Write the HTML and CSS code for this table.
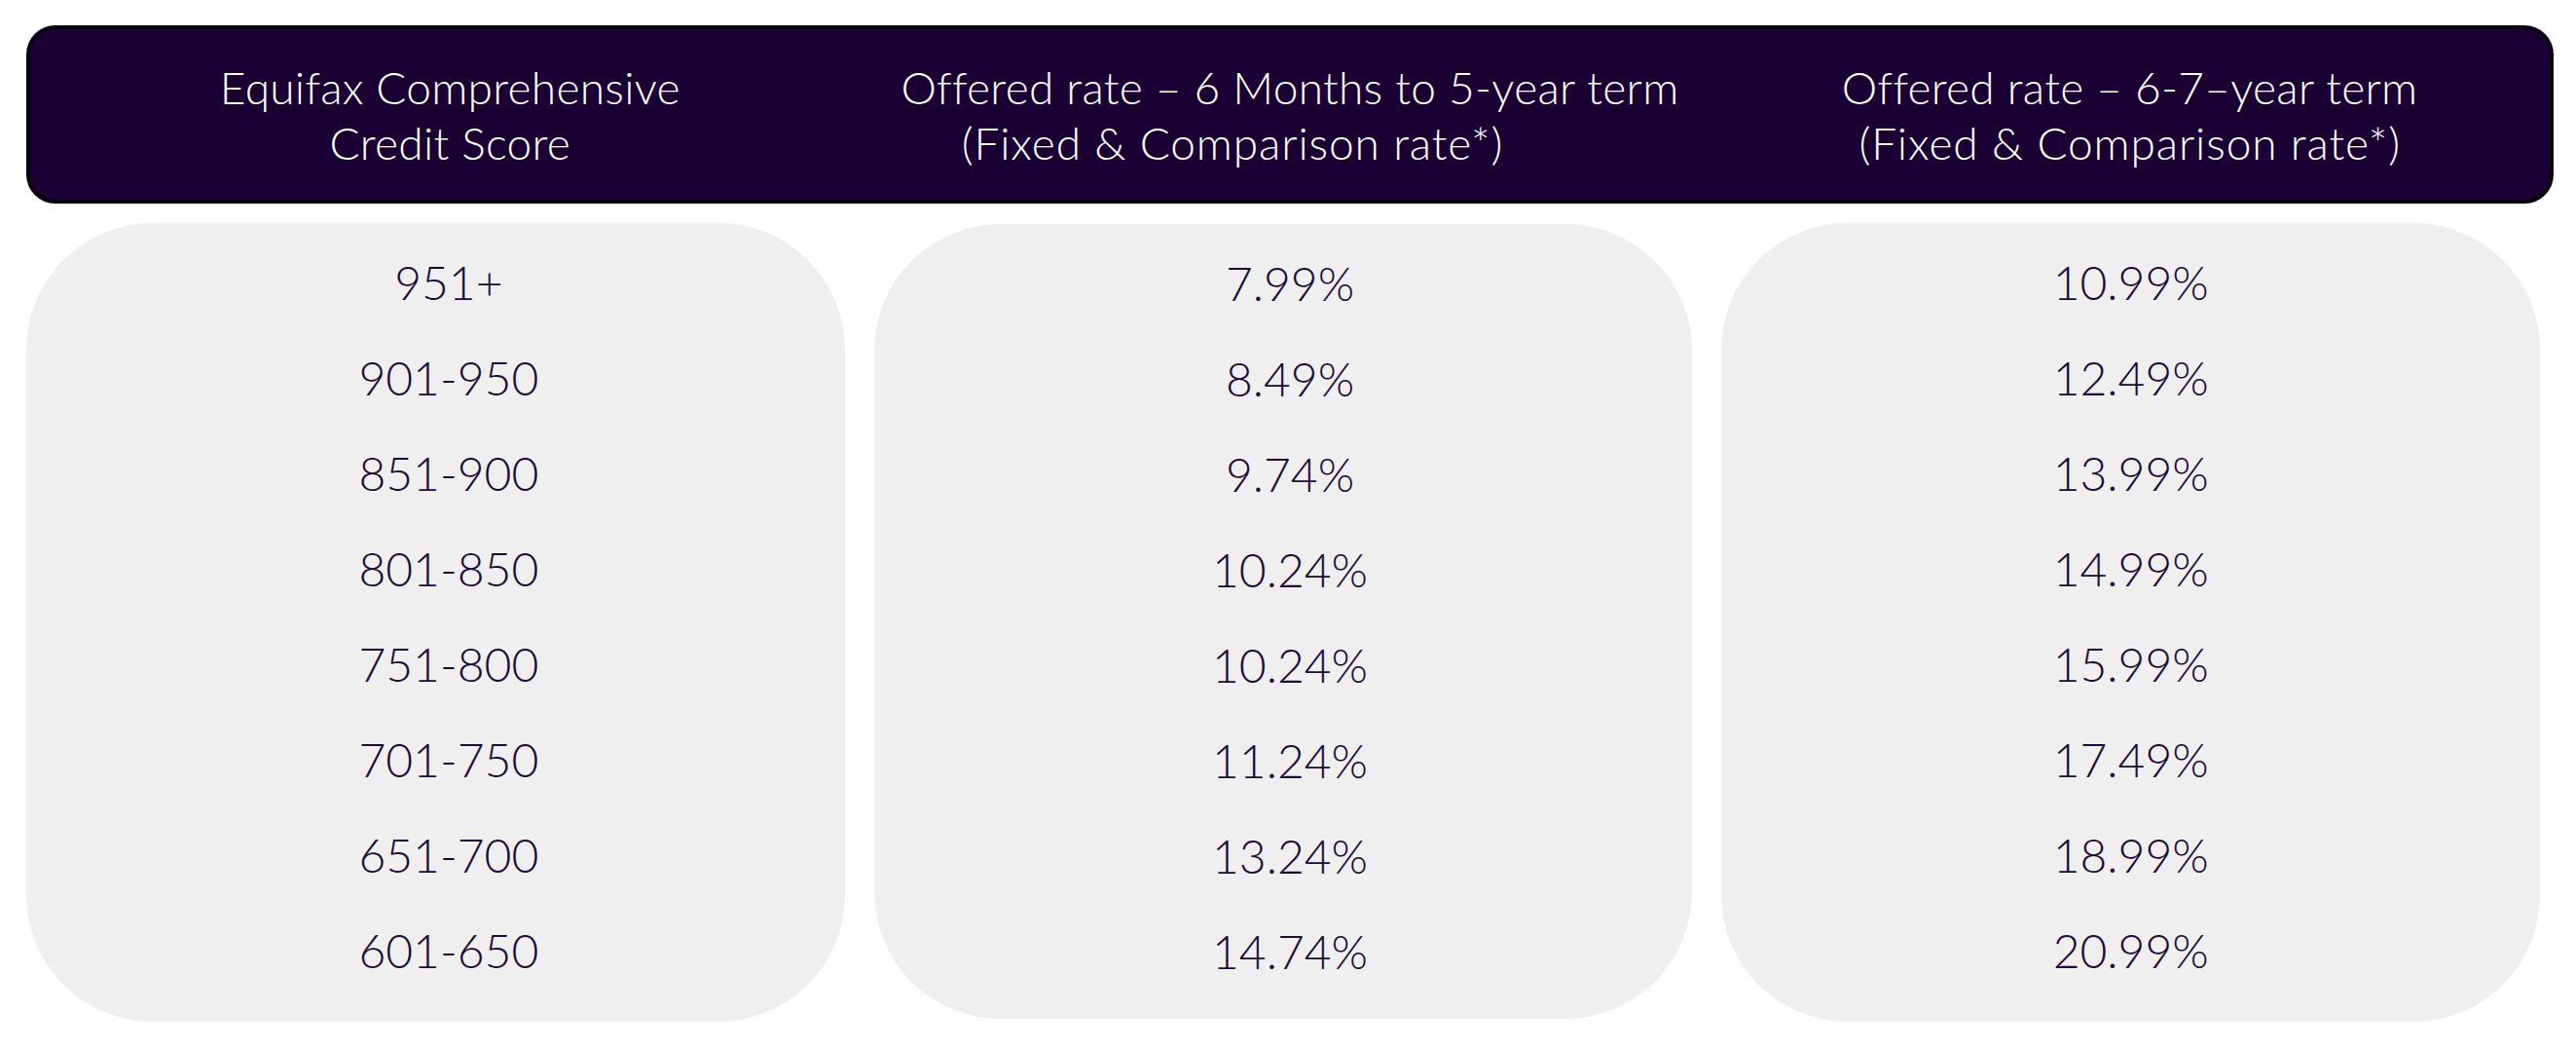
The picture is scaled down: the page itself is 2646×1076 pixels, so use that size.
FILE: index.html
```html
<!DOCTYPE html>
<html lang="en">
<head>
<meta charset="utf-8">
<title>Credit score rates</title>
<link rel="stylesheet" href="styles.css">
</head>
<body>
<div class="page">
  <div class="head">
    <div class="hcell"><span class="line">Equifax Comprehensive</span><span class="line">Credit Score</span></div>
    <div class="hcell"><span class="line">Offered rate – 6 Months to 5-year term</span><span class="line line-sub line-offset">(Fixed &amp; Comparison rate*)</span></div>
    <div class="hcell"><span class="line">Offered rate – 6-7–year term</span><span class="line line-sub">(Fixed &amp; Comparison rate*)</span></div>
  </div>
  <div class="cards">
    <div class="card card-1">
      <div class="row">951+</div>
      <div class="row">901-950</div>
      <div class="row">851-900</div>
      <div class="row">801-850</div>
      <div class="row">751-800</div>
      <div class="row">701-750</div>
      <div class="row">651-700</div>
      <div class="row">601-650</div>
    </div>
    <div class="card card-2">
      <div class="row">7.99%</div>
      <div class="row">8.49%</div>
      <div class="row">9.74%</div>
      <div class="row">10.24%</div>
      <div class="row">10.24%</div>
      <div class="row">11.24%</div>
      <div class="row">13.24%</div>
      <div class="row">14.74%</div>
    </div>
    <div class="card card-3">
      <div class="row">10.99%</div>
      <div class="row">12.49%</div>
      <div class="row">13.99%</div>
      <div class="row">14.99%</div>
      <div class="row">15.99%</div>
      <div class="row">17.49%</div>
      <div class="row">18.99%</div>
      <div class="row">20.99%</div>
    </div>
  </div>
</div>
</body>
</html>
```
FILE: styles.css
```css
html, body {
  margin: 0;
  padding: 0;
  background: #ffffff;
}

body {
  font-family: Lato, "Open Sans", "Liberation Sans", sans-serif;
}

.page {
  padding: 26px 23px 0 27px;
}

.head {
  display: grid;
  grid-template-columns: repeat(3, 1fr);
  box-sizing: border-box;
  height: 183px;
  background: #1a0033;
  border: 4px solid #08000f;
  border-radius: 30px;
  align-items: center;
}

.hcell {
  color: #ffffff;
  font-size: 46px;
  line-height: 57px;
  text-align: center;
  font-weight: 300;
  letter-spacing: 0.3px;
}

.line {
  display: block;
}

.line-sub {
  letter-spacing: 0.9px;
}

.line-offset {
  padding-right: 118px;
}

.cards {
  display: grid;
  grid-template-columns: repeat(3, 1fr);
  column-gap: 30px;
  margin: 20px 14px 0 0;
  align-items: start;
}

.card {
  background: #efefef;
  border-radius: 130px;
  padding: 12px 0 24px;
}

.card-1 {
  padding-left: 27px;
}

.card-2 {
  padding-left: 14px;
  margin-top: 1px;
  padding-bottom: 20px;
}

.row {
  color: #1b0a38;
  font-size: 48px;
  font-weight: 300;
  line-height: 98px;
  text-align: center;
}
```
